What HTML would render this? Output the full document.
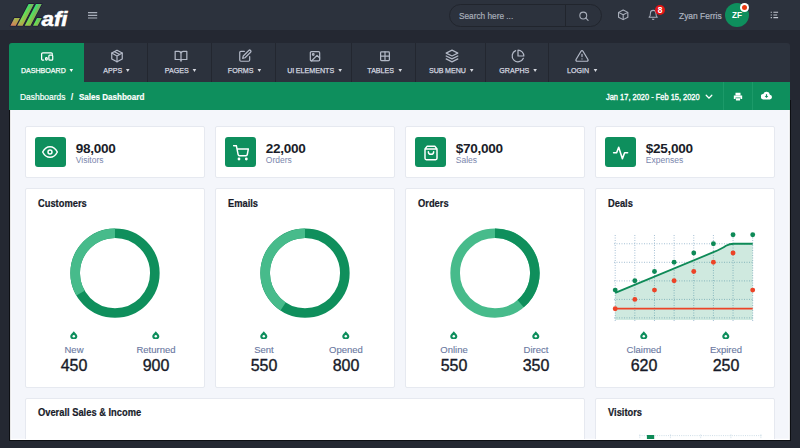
<!DOCTYPE html>
<html><head><meta charset="utf-8">
<style>
*{box-sizing:border-box;margin:0;padding:0}
html,body{width:800px;height:448px;overflow:hidden;background:#242832;font-family:"Liberation Sans",sans-serif;}
.abs{position:absolute}
#top{position:absolute;left:0;top:0;width:800px;height:30px;background:#2c323d}
#nav{position:absolute;left:9px;top:43px;width:781.3px;height:38.5px;background:#2c323d;border-radius:3px 3px 0 0;overflow:hidden}
.ni{position:absolute;top:0;height:39px;border-right:1px solid #232730;color:#d6d9e0;font-size:7.9px;text-align:center;-webkit-text-stroke:0.25px currentColor;word-spacing:-0.5px}
.ni.act{background:#0e8f5d;color:#fff;border-right:none}
.ni.act svg{margin-left:-6.6px;stroke:#fff}
.ni.act span{left:0.6px}
.ni svg{position:absolute;top:6px;left:50%;margin-left:-5.6px;width:14px;height:14px;fill:none;stroke:#b3b9c7;stroke-width:2.1;stroke-linecap:round;stroke-linejoin:round}
.ni span{position:absolute;left:2px;right:0;top:23.1px;line-height:9px;white-space:nowrap;transform:scaleX(0.9);transform-origin:50% 50%}
.ni span i{display:inline-block;width:0;height:0;border-left:2.8px solid transparent;border-right:2.8px solid transparent;border-top:3px solid currentColor;margin-left:4.5px;vertical-align:1.2px}
#ph{position:absolute;left:9px;top:81.5px;width:781.3px;height:28.8px;background:#0e8f5d;color:#fff;font-size:8px}
#content{position:absolute;left:9px;top:110.5px;width:782px;height:328.4px;overflow:hidden}
#frame{position:absolute;left:8.6px;top:100px;width:782.9px;height:341px;background:#f4f6fb;box-shadow:inset 0 0 0 1.1px #0d0f13,inset 0 0 0 2.3px #fff}
.card{position:absolute;background:#fff;border:1px solid #e6e9f0;border-radius:2px}
.ib{position:absolute;left:9.6px;top:10px;width:30.6px;height:30.3px;background:#0e8f5d;border-radius:3px}
.ib svg{position:absolute;left:8.1px;top:7.9px;width:16px;height:16px;fill:none;stroke:#fff;stroke-width:2.2;stroke-linecap:round;stroke-linejoin:round}
.num{position:absolute;left:50.3px;top:14.8px;font-size:13.6px;letter-spacing:-0.33px;font-weight:bold;color:#1a1d29;line-height:14px}
.lbl{position:absolute;left:50.3px;top:28.1px;font-size:8.5px;color:#7a86ad;line-height:10px}
.ct{position:absolute;left:12.6px;top:8.6px;font-size:10.6px;font-weight:bold;color:#171a28;line-height:11px;white-space:nowrap;-webkit-text-stroke:0.2px #171a28;transform:scaleX(0.88);transform-origin:0 50%}
.st{position:absolute;width:80px;height:50px;text-align:center;top:141px}
.st .d{position:absolute;left:36.2px;top:0.5px;width:7.6px;height:8.4px}
.st .l{position:absolute;left:0;right:0;top:14.5px;font-size:9.5px;color:#6a78a1;line-height:10px;-webkit-text-stroke:0.12px #6a78a1}
.st .n{position:absolute;left:0;right:0;top:26px;font-size:16px;color:#171a28;line-height:19px;-webkit-text-stroke:0.35px #171a28}
.donut{position:absolute;left:44px;top:39px;width:90px;height:91px}
</style></head><body>
<div id="top">
  <svg class="abs" style="left:0;top:0" width="80" height="30" viewBox="0 0 80 30">
    <defs><linearGradient id="lg" gradientUnits="userSpaceOnUse" x1="14" y1="26" x2="34" y2="4"><stop offset="0" stop-color="#d08560"/><stop offset="0.3" stop-color="#8fd04e"/><stop offset="0.6" stop-color="#5be05a"/><stop offset="1" stop-color="#3fd873"/></linearGradient></defs>
    <path d="M10.40 25.80 L14.40 17.90 L19.90 17.90 L15.70 25.80Z M17.20 25.80 L28.60 3.90 L33.90 3.90 L22.60 25.80Z M24.70 25.80 L36.00 3.90 L41.70 3.90 L30.40 25.80Z M33.00 25.80 L37.00 17.90 L41.70 17.90 L37.60 25.80Z" fill="#1f1b36" stroke="#1f1b36" stroke-width="1.6" stroke-linejoin="round"/>
    <path d="M10.40 25.80 L14.40 17.90 L19.90 17.90 L15.70 25.80Z M17.20 25.80 L28.60 3.90 L33.90 3.90 L22.60 25.80Z M24.70 25.80 L36.00 3.90 L41.70 3.90 L30.40 25.80Z M33.00 25.80 L37.00 17.90 L41.70 17.90 L37.60 25.80Z" fill="url(#lg)"/>
    <path d="M13.05 25.80 L17.15 17.90 L19.90 17.90 L15.70 25.80Z M19.90 25.80 L31.25 3.90 L33.90 3.90 L22.60 25.80Z M27.55 25.80 L38.85 3.90 L41.70 3.90 L30.40 25.80Z M35.30 25.80 L39.35 17.90 L41.70 17.90 L37.60 25.80Z" fill="#d9803a" fill-opacity="0.33"/>
    <text x="41.5" y="26" font-family="Liberation Sans" font-weight="bold" font-style="italic" font-size="19.5" fill="#fff" stroke="#fff" stroke-width="0.5" textLength="26" lengthAdjust="spacingAndGlyphs">afi</text>
  </svg>
  <svg class="abs" style="left:88px;top:11px" width="10" height="9" viewBox="0 0 10 9"><path d="M0 1.6h9.2M0 4.4h9.2M0 7h9.2" stroke="#a9afbb" stroke-width="1.15"/></svg>
  <div class="abs" style="left:449px;top:4px;width:153.3px;height:23px;border:1px solid #21252d;border-radius:12px"></div>
  <div class="abs" style="left:565px;top:5px;width:1px;height:21px;background:#21252d"></div>
  <div class="abs" style="left:458.7px;top:11.4px;font-size:9.5px;color:#a9afbb;line-height:10px;white-space:nowrap;-webkit-text-stroke:0.2px #a9afbb;transform:scaleX(0.87);transform-origin:0 50%">Search here ...</div>
  <svg class="abs" style="left:578px;top:10px" width="11" height="11" viewBox="-1 -1.6 24 24" fill="none" stroke="#a9afbb" stroke-width="2.3" stroke-linecap="round"><circle cx="10.5" cy="10.5" r="7.5"/><path d="M21 21l-5.2-5.2"/></svg>
  <svg class="abs" style="left:617px;top:9px" width="12.4" height="11.6" viewBox="0 0 24 24" preserveAspectRatio="none" fill="none" stroke="#a9afbb" stroke-width="2.2" stroke-linejoin="round"><path d="M12 2l9 5v10l-9 5-9-5V7z"/><path d="M3 7l9 5 9-5M12 12v10"/></svg>
  <svg class="abs" style="left:648px;top:9px" width="11" height="11" viewBox="0.7 -1 24 24" fill="none" stroke="#a9afbb" stroke-width="2.2" stroke-linejoin="round" stroke-linecap="round"><path d="M18 8a6 6 0 0 0-12 0c0 7-3 9-3 9h18s-3-2-3-9"/><path d="M13.7 21a2 2 0 0 1-3.4 0"/></svg>
  <div class="abs" style="left:654.7px;top:4.7px;width:10.6px;height:10.6px;border-radius:6px;background:#e21515;color:#fff;font-size:8.4px;font-weight:bold;text-align:center;line-height:10.9px">8</div>
  <div class="abs" style="left:678.6px;top:10.9px;font-size:9.4px;color:#b0b6c1;line-height:10px;white-space:nowrap;-webkit-text-stroke:0.2px #b0b6c1;transform:scaleX(0.9);transform-origin:0 50%">Zyan Ferris</div>
  <div class="abs" style="left:725px;top:3px;width:24px;height:24px;border-radius:12px;background:#0e8f5d;color:#fff;font-size:8.2px;font-weight:bold;text-align:center;line-height:26.2px">ZF</div>
  <div class="abs" style="left:740.1px;top:3px;width:9.2px;height:9.2px;border-radius:5px;background:#fff"></div><div class="abs" style="left:742.1px;top:5px;width:5.2px;height:5.2px;border-radius:3px;background:#ea3a10"></div>
  <svg class="abs" style="left:770px;top:11px" width="10" height="9" viewBox="0 0 10 9"><path d="M0.7 1.15h1.2M3.4 1.15h4.7M0.7 3.9h1.2M3.4 3.9h3.8M0.7 6.6h1.2M3.4 6.6h4.7" stroke="#c3c8d1" stroke-width="1.05"/></svg>
</div>

<div id="frame"></div>
<div id="nav">
  <div class="ni act" style="left:0;width:75px"><svg viewBox="0 0 24 24"><path d="M6.3 19H4.8a2 2 0 0 1-2-2V8.6a2 2 0 0 1 2-2h14.4a2 2 0 0 1 2 2v.6"/><rect x="15.2" y="10.6" width="6.6" height="8.4" rx="1.6"/><rect x="9.6" y="14.8" width="2.8" height="4.2" rx="1.4"/></svg><span>DASHBOARD<i></i></span></div>
  <div class="ni" style="left:75px;width:64px"><svg viewBox="0 0 24 24"><path d="M12 2l9 5v10l-9 5-9-5V7z"/><path d="M3 7l9 5 9-5M12 12v10M7.5 4.5l9 5"/></svg><span>APPS<i></i></span></div>
  <div class="ni" style="left:139px;width:64px"><svg viewBox="0 0 24 24"><path d="M2 4h6a4 4 0 0 1 4 4v13a3 3 0 0 0-3-3H2zM22 4h-6a4 4 0 0 0-4 4v13a3 3 0 0 1 3-3h7z"/></svg><span>PAGES<i></i></span></div>
  <div class="ni" style="left:203px;width:64px"><svg viewBox="0 0 24 24"><path d="M11 4H5a2 2 0 0 0-2 2v13a2 2 0 0 0 2 2h13a2 2 0 0 0 2-2v-6"/><path d="M18.5 2.5a2.1 2.1 0 0 1 3 3L12 15l-4 1 1-4z"/></svg><span>FORMS<i></i></span></div>
  <div class="ni" style="left:267px;width:76px"><svg viewBox="0 0 24 24"><rect x="4" y="4.5" width="16" height="16" rx="2"/><circle cx="9" cy="9.5" r="1.4"/><path d="M20 15.5l-4.5-4.5L6 20.5"/></svg><span>UI ELEMENTS<i></i></span></div>
  <div class="ni" style="left:343px;width:64px"><svg viewBox="0 0 24 24"><rect x="4.5" y="4.8" width="15" height="15" rx="1.5"/><path d="M12 4.8v15M4.5 12.3h15"/></svg><span>TABLES<i></i></span></div>
  <div class="ni" style="left:407px;width:69.5px"><svg viewBox="0 0 24 24"><path d="M12 2L2 7l10 5 10-5zM2 17l10 5 10-5M2 12l10 5 10-5"/></svg><span>SUB MENU<i></i></span></div>
  <div class="ni" style="left:476.5px;width:63.3px"><svg viewBox="0 0 24 24"><path d="M21.2 15.9A10 10 0 1 1 8 2.8"/><path d="M22 12A10 10 0 0 0 12 2v10z"/></svg><span>GRAPHS<i></i></span></div>
  <div class="ni" style="left:539.8px;width:64px;border-right:none"><svg viewBox="0 0 24 24"><path d="M10.3 3.9L1.8 18a2 2 0 0 0 1.7 3h17a2 2 0 0 0 1.7-3L13.7 3.9a2 2 0 0 0-3.4 0zM12 9v4M12 17h.01"/></svg><span>LOGIN<i></i></span></div>
</div>

<div id="ph">
  <div class="abs" style="left:10.8px;top:10px;line-height:10px;white-space:nowrap;font-size:9.1px;-webkit-text-stroke:0.2px #fff;transform:scaleX(0.925);transform-origin:0 50%">Dashboards</div>
  <div class="abs" style="left:61.7px;top:10px;line-height:10px;white-space:nowrap;font-size:9.1px;font-weight:bold">/</div>
  <div class="abs" style="left:70px;top:10px;line-height:10px;white-space:nowrap;font-size:9.1px;font-weight:bold;-webkit-text-stroke:0.2px #fff;transform:scaleX(0.885);transform-origin:0 50%">Sales Dashboard</div>
  <div class="abs" style="left:597px;top:10px;line-height:10px;white-space:nowrap;font-size:8.4px;-webkit-text-stroke:0.35px #fff;transform:scaleX(0.89);transform-origin:0 50%">Jan 17, 2020 - Feb 15, 2020</div>
  <svg class="abs" style="left:696px;top:12px" width="8" height="6" viewBox="0 0 8 6"><path d="M1.2 1.3l2.8 2.8L6.8 1.3" stroke="#fff" stroke-width="1.3" fill="none" stroke-linecap="round"/></svg>
  <div class="abs" style="left:714.2px;top:0;width:1px;height:28.5px;background:#1c9a69"></div>
  <div class="abs" style="left:743.1px;top:0;width:1px;height:28.5px;background:#1c9a69"></div>
  <svg class="abs" style="left:723.6px;top:10px" width="10" height="9.4" viewBox="0 0 24 24" preserveAspectRatio="none" fill="#fff"><path d="M6 2h12v6H6zM2 9h20v9h-4v-4H6v4H2zM7 16h10v6H7z"/></svg>
  <svg class="abs" style="left:751.9px;top:9.6px" width="11" height="9.4" viewBox="0 0 24 20" preserveAspectRatio="none" fill="#fff"><path d="M19.4 8A7.5 7.5 0 0 0 5 6.5 5.5 5.5 0 0 0 5.5 18h13a5 5 0 0 0 .9-10z"/><path d="M12 15l-4-4.5h2.7V7h2.6v3.5H16z" fill="#0e8f5d"/></svg>
</div>

<div id="content">
  <!-- row1 -->
  <div class="card" style="left:15.5px;top:15.5px;width:180.5px;height:52px"><div class="ib"><svg style="left:7.4px;top:7.4px" viewBox="0 0 24 24"><path d="M1 12s4-8 11-8 11 8 11 8-4 8-11 8S1 12 1 12z"/><circle cx="12" cy="12" r="3"/></svg></div><div class="num">98,000</div><div class="lbl">Visitors</div></div>
  <div class="card" style="left:205.5px;top:15.5px;width:180.5px;height:52px"><div class="ib"><svg viewBox="0 0 24 24"><circle cx="9" cy="21" r="1"/><circle cx="20" cy="21" r="1"/><path d="M1 1h4l2.7 13.4a2 2 0 0 0 2 1.6h9.7a2 2 0 0 0 2-1.6L23 6H6"/></svg></div><div class="num">22,000</div><div class="lbl">Orders</div></div>
  <div class="card" style="left:395.5px;top:15.5px;width:180.5px;height:52px"><div class="ib"><svg viewBox="0 0 24 24"><path d="M6 2L3 6v14a2 2 0 0 0 2 2h14a2 2 0 0 0 2-2V6l-3-4zM3 6h18M16 10a4 4 0 0 1-8 0"/></svg></div><div class="num">$70,000</div><div class="lbl">Sales</div></div>
  <div class="card" style="left:585.5px;top:15.5px;width:180.5px;height:52px"><div class="ib"><svg style="left:0;top:0;width:31px;height:31px;stroke-width:1.55" viewBox="0 0 31 31"><path d="M8.6 15.7H11.6L13.7 10.2L17.4 21.8L19.6 15.7H22.6"/></svg></div><div class="num">$25,000</div><div class="lbl">Expenses</div></div>
  <!-- row2 -->
  <div class="card" style="left:15.5px;top:77.5px;width:180.5px;height:200px"><div class="ct">Customers</div>
    <svg class="donut" viewBox="0 -0.1 90 91"><circle cx="45" cy="45" r="39.85" fill="none" stroke="#0f8f5c" stroke-width="9.6"/><path d="M45 5.15 A39.85 39.85 0 0 0 10.49 64.93" fill="none" stroke="#47bb8b" stroke-width="9.6"/></svg>
    <div class="st" style="left:8.5px"><svg class="d" viewBox="0 0 10 11"><path d="M5 0.3C6.5 2.5 9.7 4.5 9.7 6.8A4.7 4.2 0 0 1 0.3 6.8C0.3 4.5 3.5 2.5 5 0.3z" fill="#0e8f5d"/><circle cx="5" cy="6.9" r="1.6" fill="#fff"/></svg><span class="l">New</span><span class="n">450</span></div>
    <div class="st" style="left:90.5px"><svg class="d" viewBox="0 0 10 11"><path d="M5 0.3C6.5 2.5 9.7 4.5 9.7 6.8A4.7 4.2 0 0 1 0.3 6.8C0.3 4.5 3.5 2.5 5 0.3z" fill="#0e8f5d"/><circle cx="5" cy="6.9" r="1.6" fill="#fff"/></svg><span class="l">Returned</span><span class="n">900</span></div>
  </div>
  <div class="card" style="left:205.5px;top:77.5px;width:180.5px;height:200px"><div class="ct">Emails</div>
    <svg class="donut" viewBox="0 -0.1 90 91"><circle cx="45" cy="45" r="39.85" fill="none" stroke="#0f8f5c" stroke-width="9.6"/><path d="M45 5.15 A39.85 39.85 0 0 0 23.1 78.29" fill="none" stroke="#47bb8b" stroke-width="9.6"/></svg>
    <div class="st" style="left:8.5px"><svg class="d" viewBox="0 0 10 11"><path d="M5 0.3C6.5 2.5 9.7 4.5 9.7 6.8A4.7 4.2 0 0 1 0.3 6.8C0.3 4.5 3.5 2.5 5 0.3z" fill="#0e8f5d"/><circle cx="5" cy="6.9" r="1.6" fill="#fff"/></svg><span class="l">Sent</span><span class="n">550</span></div>
    <div class="st" style="left:90.5px"><svg class="d" viewBox="0 0 10 11"><path d="M5 0.3C6.5 2.5 9.7 4.5 9.7 6.8A4.7 4.2 0 0 1 0.3 6.8C0.3 4.5 3.5 2.5 5 0.3z" fill="#0e8f5d"/><circle cx="5" cy="6.9" r="1.6" fill="#fff"/></svg><span class="l">Opened</span><span class="n">800</span></div>
  </div>
  <div class="card" style="left:395.5px;top:77.5px;width:180.5px;height:200px"><div class="ct">Orders</div>
    <svg class="donut" viewBox="0 -0.1 90 91"><circle cx="45" cy="45" r="39.85" fill="none" stroke="#47bb8b" stroke-width="9.6"/><path d="M45 5.15 A39.85 39.85 0 0 1 70.62 75.53" fill="none" stroke="#0f8f5c" stroke-width="9.6"/></svg>
    <div class="st" style="left:8.5px"><svg class="d" viewBox="0 0 10 11"><path d="M5 0.3C6.5 2.5 9.7 4.5 9.7 6.8A4.7 4.2 0 0 1 0.3 6.8C0.3 4.5 3.5 2.5 5 0.3z" fill="#0e8f5d"/><circle cx="5" cy="6.9" r="1.6" fill="#fff"/></svg><span class="l">Online</span><span class="n">550</span></div>
    <div class="st" style="left:90.5px"><svg class="d" viewBox="0 0 10 11"><path d="M5 0.3C6.5 2.5 9.7 4.5 9.7 6.8A4.7 4.2 0 0 1 0.3 6.8C0.3 4.5 3.5 2.5 5 0.3z" fill="#0e8f5d"/><circle cx="5" cy="6.9" r="1.6" fill="#fff"/></svg><span class="l">Direct</span><span class="n">350</span></div>
  </div>
  <div class="card" style="left:585.5px;top:77.5px;width:180.5px;height:200px"><div class="ct">Deals</div>
    <svg class="abs" style="left:0;top:1px" width="178" height="140" viewBox="0 0.5 178 140">
      <g stroke="#9bb9cf" stroke-width="0.9" stroke-dasharray="1 1.5" fill="none">
        <path d="M19.2 45.5v86M38.84 45.5v86M58.48 45.5v86M78.12 45.5v86M97.76 45.5v86M117.4 45.5v86M137.04 45.5v86M156.7 45.5v86"/>
        <path d="M18 54.25h140M18 72.8h140M18 91.4h140M18 109.9h140M18 128.4h140"/>
      </g>
      <path d="M19.2 103.3 L117.4 62.7 Q126 59 130 56.2 Q133.5 54.25 138 54.25 L156.7 54.25 L156.7 130.5 L19.2 130.5Z" fill="#0e8f5d" fill-opacity="0.2"/>
      <path d="M19.2 103.3 L117.4 62.7 Q126 59 130 56.2 Q133.5 54.25 138 54.25 L156.7 54.25" fill="none" stroke="#0e8a57" stroke-width="1.8" stroke-linejoin="round"/>
      <path d="M19.2 119.2h137.5" stroke="#ec4326" stroke-width="1.8"/>
      <g fill="#0e8a57"><circle cx="19.2" cy="100.6" r="2.45"/><circle cx="38.84" cy="91.3" r="2.45"/><circle cx="58.48" cy="82" r="2.45"/><circle cx="78.12" cy="72.8" r="2.45"/><circle cx="97.76" cy="63.5" r="2.45"/><circle cx="117.4" cy="54.25" r="2.45"/><circle cx="137.04" cy="45.3" r="2.45"/><circle cx="156.7" cy="45.3" r="2.45"/></g>
      <g fill="#ec4326"><circle cx="19.2" cy="119.2" r="2.45"/><circle cx="38.84" cy="109.9" r="2.45"/><circle cx="58.48" cy="100.6" r="2.45"/><circle cx="78.12" cy="91.3" r="2.45"/><circle cx="97.76" cy="82" r="2.45"/><circle cx="117.4" cy="72.8" r="2.45"/><circle cx="137.04" cy="63.5" r="2.45"/><circle cx="156.7" cy="100.6" r="2.45"/></g>
    </svg>
    <div class="st" style="left:8.5px"><svg class="d" viewBox="0 0 10 11"><path d="M5 0.3C6.5 2.5 9.7 4.5 9.7 6.8A4.7 4.2 0 0 1 0.3 6.8C0.3 4.5 3.5 2.5 5 0.3z" fill="#0e8f5d"/><circle cx="5" cy="6.9" r="1.6" fill="#fff"/></svg><span class="l">Claimed</span><span class="n">620</span></div>
    <div class="st" style="left:90.5px"><svg class="d" viewBox="0 0 10 11"><path d="M5 0.3C6.5 2.5 9.7 4.5 9.7 6.8A4.7 4.2 0 0 1 0.3 6.8C0.3 4.5 3.5 2.5 5 0.3z" fill="#0e8f5d"/><circle cx="5" cy="6.9" r="1.6" fill="#fff"/></svg><span class="l">Expired</span><span class="n">250</span></div>
  </div>
  <!-- row3 -->
  <div class="card" style="left:15.5px;top:287.5px;width:560.5px;height:60px"><div class="ct" style="top:7.6px">Overall Sales &amp; Income</div></div>
  <div class="card" style="left:585.5px;top:287.5px;width:180.5px;height:60px"><div class="ct" style="top:7.6px">Visitors</div>
    <svg class="abs" style="left:0;top:31px" width="178" height="20" viewBox="0.6 0 178 20">
      <g stroke="#a8c3d5" stroke-width="0.8" stroke-dasharray="1 1.2" fill="none" opacity="0.7"><path d="M44 5.6h122M44.4 4.5v6M75 4.5v6M105.3 4.5v6M135.5 4.5v6M165.5 4.5v6"/></g>
      <rect x="51.5" y="5" width="7.3" height="10" fill="#0e8a57"/>
    </svg>
  </div>
</div>
<div class="abs" style="left:0;top:441px;width:800px;height:9px;background:#242832"></div>
</body></html>
